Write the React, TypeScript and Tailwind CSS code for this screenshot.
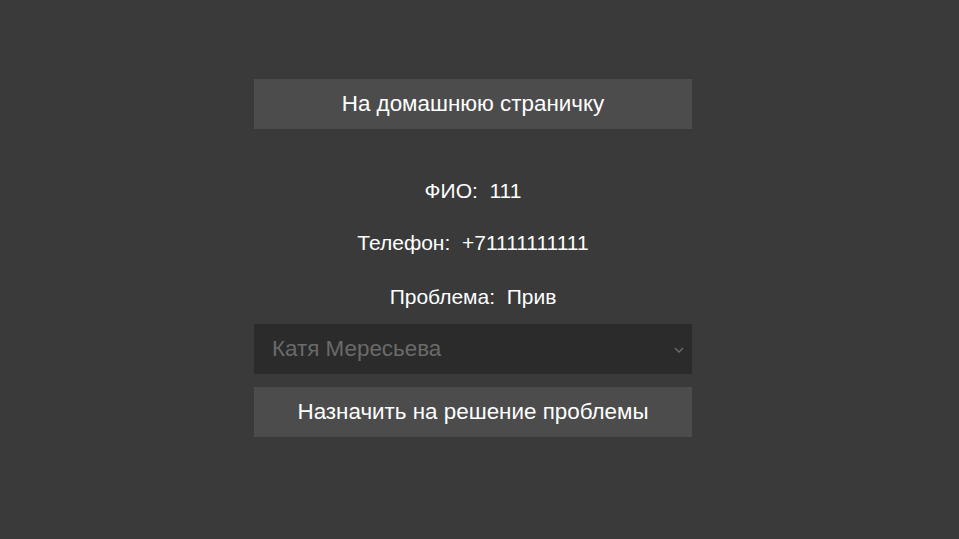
import React from "react";

export default function App() {
  return (
    <div className="min-h-[539px] w-full bg-[#3a3a3a] flex flex-col items-center pt-[79px] pr-[13px] text-white font-['Liberation_Sans',Arial,sans-serif]">
      <div className="w-[438px] flex flex-col">
        <button className="h-[50px] w-full bg-[#4c4c4c] text-[22.4px] text-white flex items-center justify-center font-['Liberation_Sans',Arial,sans-serif]">
          На домашнюю страничку
        </button>
        <p className="mt-[50px] text-[21px] leading-[24px] text-center">{"ФИО:\u00a0 111"}</p>
        <p className="mt-[28px] text-[21px] leading-[24px] text-center">{"Телефон:\u00a0 +71111111111"}</p>
        <p className="mt-[30px] text-[21px] leading-[24px] text-center">{"Проблема:\u00a0 Прив"}</p>
        <div className="mt-[15px] h-[50px] w-full bg-[#2b2b2b] flex items-center justify-between pl-[18px] pr-[8px]">
          <span className="text-[22.4px] text-[#6a6a6a]">Катя Мересьева</span>
          <svg width="10" height="6" viewBox="0 0 10 6" className="mt-[2px]">
            <path d="M1 1 L5 5 L9 1" stroke="#6a6a6a" strokeWidth="1.5" fill="none" />
          </svg>
        </div>
        <button className="mt-[13px] h-[50px] w-full bg-[#4c4c4c] text-[22.4px] text-white flex items-center justify-center font-['Liberation_Sans',Arial,sans-serif]">
          Назначить на решение проблемы
        </button>
      </div>
    </div>
  );
}
